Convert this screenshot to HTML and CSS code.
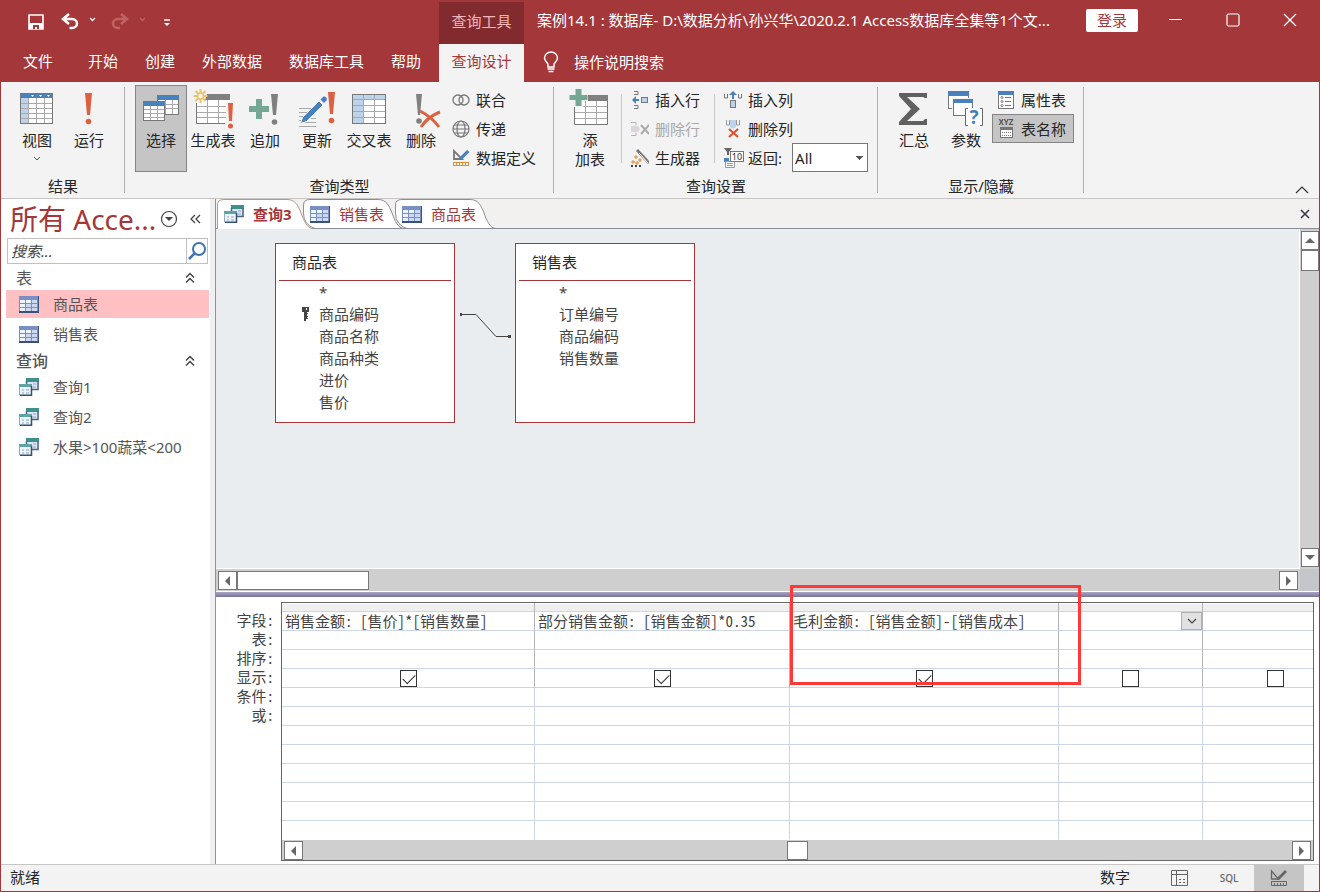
FILE: index.html
```html
<!DOCTYPE html>
<html lang="zh-CN">
<head>
  <meta charset="UTF-8">
  <title>案例14.1 : 数据库</title>
  <link rel="stylesheet" href="styles.css">
</head>
<body>
  <!-- shared icons -->
  <svg class="sprite" aria-hidden="true">
    <symbol id="i-table" viewBox="0 0 20 17">
      <rect width="20" height="17" fill="#7890c4"/>
      <rect y="15" width="20" height="2" fill="#3d5078"/>
      <path d="M19.500 0v17" stroke="#3d5078"/>
      <path d="M1 4h5v3H1zM7 4h5v3H7zM1 8h5v3H1zM1 12h5v3H1z" fill="#eef4fc"/>
      <path d="M13 4h5v3h-5zM7 8h5v3H7zM13 8h5v3h-5zM7 12h5v3H7zM13 12h5v3h-5z" fill="#ccd8f2"/>
    </symbol>
    <symbol id="i-query" viewBox="0 0 20 18">
      <rect x="7" y="0" width="13" height="12" fill="#dce6f4"/>
      <path d="M7 0h13v4H7z" fill="#3f8f8c"/>
      <path d="M7.500 3v4M19 3v8.500h-7" fill="none" stroke="#4a6684" stroke-width="1.500"/>
      <path d="M14 6h3M14 9h3" stroke="#8fa5c6"/>
      <rect x="0" y="6" width="13" height="12" fill="#eef4fc"/>
      <path d="M0 6h13v3H0z" fill="#5fa3a2"/>
      <path d="M.500 8v9" stroke="#8fa5c6"/>
      <path d="M12.500 8v9.200H1" fill="none" stroke="#33506e" stroke-width="1.500"/>
      <path d="M3 12h2M3 15h2M7 12h3M7 15h3" stroke="#8fa5c6"/>
    </symbol>
    <symbol id="i-fold" viewBox="0 0 10 12">
      <path d="M1 5.500l4-4 4 4M1 10.500l4-4 4 4" fill="none" stroke="#444" stroke-width="1.500"/>
    </symbol>
  </svg>

  <div class="app">
    <header class="top">
      <div class="quick">
        <button class="qbtn" aria-label="保存"><svg width="18" height="18" viewBox="0 0 18 18"><path d="M2 2h14v14H2z" fill="none" stroke="#fff" stroke-width="1.600"/><path d="M2 10h14v6H2z" fill="#fff"/><path d="M6 12h6v4h-2v-2H8v2H6z" fill="#a4373a"/></svg></button>
        <button class="qbtn" aria-label="撤消"><svg width="34" height="18" viewBox="0 0 34 18"><path d="M8 1L2 6l6 5M2 6h9a5 4.500 0 0 1 0 9H8.500" fill="none" stroke="#fff" stroke-width="2.500"/><path d="M29 5l2.500 2.500L34 5" fill="none" stroke="#fff" stroke-width="1.300"/></svg></button>
        <button class="qbtn" aria-label="恢复" disabled><svg width="34" height="18" viewBox="0 0 34 18"><path d="M10 1l6 5-6 5M16 6H7a5 4.500 0 0 0 0 9h2" fill="none" stroke="#bf6365" stroke-width="2.500"/><path d="M29 5l2.500 2.500L34 5" fill="none" stroke="#bf6365" stroke-width="1.300"/></svg></button>
        <button class="qbtn" aria-label="自定义快速访问工具栏"><svg width="8" height="10" viewBox="0 0 8 10"><path d="M1 3h6" stroke="#fff" stroke-width="1.500"/><path d="M1 6h6L4 9z" fill="#fff"/></svg></button>
      </div>
      <div class="context">查询工具</div>
      <div class="caption">
        <span class="doc-name">案例14.1 : 数据库- D:\数据分析\孙兴华\2020.2.1 Access数据库全集等1个文...</span>
        <button class="login">登录</button>
        <div class="win">
          <button aria-label="最小化"><svg width="14" height="14" viewBox="0 0 14 14"><path d="M0 6.500h13" stroke="#fff"/></svg></button>
          <button aria-label="最大化"><svg width="14" height="14" viewBox="0 0 14 14"><rect x="1" y="1" width="12" height="12" rx="1.500" fill="none" stroke="#fff" stroke-width="1.200"/></svg></button>
          <button aria-label="关闭"><svg width="14" height="14" viewBox="0 0 14 14"><path d="M1 1l12 12M13 1L1 13" stroke="#fff" stroke-width="1.300"/></svg></button>
        </div>
      </div>
      <nav class="menu">
        <a href="#" class="file">文件</a>
        <a href="#">开始</a>
        <a href="#">创建</a>
        <a href="#">外部数据</a>
        <a href="#">数据库工具</a>
        <a href="#">帮助</a>
      </nav>
      <a href="#" class="menu-on">查询设计</a>
      <a href="#" class="tell">
        <svg width="16" height="22" viewBox="0 0 16 22"><path d="M5 16v-2.500C5 11.500 1.500 10.500 1.500 7a6.500 6 0 0 1 13 0c0 3.500-3.500 4.500-3.500 6.500V16z" fill="none" stroke="#fff" stroke-width="1.500"/><path d="M4.500 18h7M5.500 20.500h5" stroke="#fff" stroke-width="1.500"/></svg>
        操作说明搜索
      </a>
    </header>

    <div class="ribbon">
      <section class="group">
        <div class="tools">
          <button class="big">
            <svg width="52" height="44" viewBox="0 0 52 44"><rect x="9.500" y="7.500" width="32" height="30" fill="#fff"/><path d="M10 12h8v25h-8z" fill="#bdd3ea"/><path d="M9 7h33v5H9z" fill="#4a80bc"/><path d="M10 17.500h31M10 22.500h31M10 27.500h31M10 32.500h31M17.500 12v25M25.500 12v25M33.500 12v25" stroke="#a9a9a9"/><path d="M20 9h3l-1.500 2zM28 9h3l-1.500 2zM36 9h3l-1.500 2z" fill="#fff"/><rect x="9.500" y="7.500" width="32" height="30" fill="none" stroke="#777"/></svg>
            <span>视图</span>
            <svg class="more" width="8" height="6" viewBox="0 0 8 6"><path d="M1 1l3 3 3-3" fill="none" stroke="#555"/></svg>
          </button>
          <button class="big">
            <svg width="52" height="44" viewBox="0 0 52 44"><path d="M22 7h7l-2 22h-3z" fill="#db6141"/><circle cx="25.500" cy="35.500" r="2.800" fill="#db6141"/></svg>
            <span>运行</span>
          </button>
        </div>
        <h2>结果</h2>
      </section>

      <section class="group">
        <div class="tools">
          <button class="big on">
            <svg width="52" height="44" viewBox="0 0 52 44"><rect x="22.500" y="9.500" width="21" height="19" fill="#fff" stroke="#777"/><path d="M22 9h22v5H22z" fill="#4a80bc"/><path d="M23 18.500h20M23 22.500h20M30.500 14v14M37.500 14v14" stroke="#a9a9a9"/><rect x="8.500" y="15.500" width="21" height="19" fill="#fff" stroke="#777"/><path d="M8 15h22v5H8z" fill="#4a80bc"/><path d="M9 23.500h20M9 27.500h20M9 31.500h20M15.500 20v14M22.500 20v14" stroke="#a9a9a9"/></svg>
            <span>选择</span>
          </button>
          <button class="big">
            <svg width="52" height="44" viewBox="0 0 52 44"><path d="M9.500 12V37.500h33V10z" fill="#fff"/><path d="M20 8h23v6H18z" fill="#808080"/><path d="M10 20.500h32M10 26.500h32M10 31.500h32M20.500 14v23M31.500 14v23" stroke="#a9a9a9"/><path d="M9.500 17v20.500H38" fill="none" stroke="#777"/><path d="M13.500 3v14M6.500 10h14M8.500 5l10 10M18.500 5l-10 10" stroke="#eec168" stroke-width="2"/><circle cx="13.500" cy="10" r="3" fill="#f3f3f3" stroke="#eec168" stroke-width="1.500"/><path d="M39 16h9v27h-9z" fill="#f3f3f3"/><path d="M41 17h5l-1 18h-3z" fill="#db6141"/><circle cx="43.500" cy="40" r="2.500" fill="#db6141"/></svg>
            <span>生成表</span>
          </button>
          <button class="big">
            <svg width="52" height="44" viewBox="0 0 52 44"><path d="M17 13h6v7h7v6h-7v7h-6v-7h-7v-6h7z" fill="#75a795"/><path d="M32 8h7l-2 21h-3z" fill="#808080"/><circle cx="35.500" cy="36" r="2.800" fill="#808080"/></svg>
            <span>追加</span>
          </button>
          <button class="big">
            <svg width="52" height="44" viewBox="0 0 52 44"><path d="M8 22.500h14M8 26.500h10M8 30.500h6M8 34.500h4M14 36.500h11M8 40.500h17M20 32.500h5" stroke="#a9a9a9"/><path d="M9.500 37.500l2-6L28 15l4 4-16.500 16.500z" fill="#4a80bc" stroke="#f3f3f3"/><path d="M29.500 13.500l2.500-2.500c2-1.500 5 1.500 3.500 3.500L33 17z" fill="#4a80bc"/><path d="M37 6h7l-2 22h-3z" fill="#db6141"/><circle cx="40.500" cy="34.500" r="2.800" fill="#db6141"/></svg>
            <span>更新</span>
          </button>
          <button class="big">
            <svg width="52" height="44" viewBox="0 0 52 44"><rect x="9.500" y="8.500" width="33" height="29" fill="#fff"/><path d="M10 9h32v5H20v23H10z" fill="#bdd3ea"/><path d="M10 13.500h32M10 19.500h32M10 25.500h32M10 31.500h32M20.500 9v28M31.500 9v28" stroke="#a9a9a9"/><rect x="9.500" y="8.500" width="33" height="29" fill="none" stroke="#777"/></svg>
            <span>交叉表</span>
          </button>
          <button class="big">
            <svg width="52" height="44" viewBox="0 0 52 44"><path d="M21 8h6l-2 21h-2z" fill="#808080"/><circle cx="24" cy="35" r="2.800" fill="#808080"/><path d="M25 25c8 4 14 9 19 16M45 26c-8 3-15 9-19 15" fill="none" stroke="#db6141" stroke-width="3"/></svg>
            <span>删除</span>
          </button>
          <div class="stack">
            <button><svg width="18" height="18" viewBox="0 0 18 18"><g fill="none" stroke="#777" stroke-width="1.300"><circle cx="6" cy="9" r="5"/><circle cx="12" cy="9" r="5"/></g></svg>联合</button>
            <button><svg width="18" height="18" viewBox="0 0 18 18"><g fill="none" stroke="#777" stroke-width="1.200"><circle cx="9" cy="9" r="8"/><ellipse cx="9" cy="9" rx="4" ry="8"/><path d="M1 9h16M2 5h14M2 13h14"/></g></svg>传递</button>
            <button><svg width="18" height="18" viewBox="0 0 18 18"><path d="M2 2v8h8z" fill="none" stroke="#777" stroke-width="1.800"/><path d="M7 11l1-3 7-7 2.500 2-7 7z" fill="#4a80bc"/><rect x="1.500" y="13.500" width="15" height="3" fill="#fff" stroke="#e38a35"/><path d="M4.500 14v2M7.500 14v2M10.500 14v2M13.500 14v2" stroke="#e38a35"/></svg>数据定义</button>
          </div>
        </div>
        <h2>查询类型</h2>
      </section>

      <section class="group">
        <div class="tools">
          <button class="big">
            <svg width="52" height="44" viewBox="0 0 52 44"><path d="M10.500 10h33v28.500h-33z" fill="#fff"/><path d="M11 20.500h32M11 26.500h32M11 32.500h32M21.500 15v23M32.500 15v23" stroke="#a9a9a9"/><path d="M10.500 20v18.500h33V15" fill="none" stroke="#777"/><path d="M24 9h20v6H24z" fill="#808080"/><path d="M9 2h11v5h4v8h-5v6H9z" fill="#f3f3f3"/><path d="M11.500 3h6v6h6v5h-6v6h-6v-6h-6V9h6z" fill="#75a795"/></svg>
            <span>添<br>加表</span>
          </button>
          <div class="stack rows">
            <button><svg width="18" height="18" viewBox="0 0 18 18"><path d="M3 .500h4v3H3M3 17.500h4v-3H3" fill="none" stroke="#777"/><path d="M2 9h6" stroke="#4a80bc" stroke-width="2"/><path d="M1 9l4-4v8z" fill="#4a80bc"/><rect x="10.500" y="6.500" width="6" height="5" fill="#bdd3ea" stroke="#777"/></svg>插入行</button>
            <button disabled><svg width="18" height="18" viewBox="0 0 18 18"><path d="M0 2.500h5v3M0 15.500h5v-3" fill="none" stroke="#b5b5b5"/><path d="M0 6h7l2 3-2 3H0z" fill="#dcd5dc"/><path d="M10 5l8 9M18 5l-8 9" stroke="#aaa" stroke-width="2"/></svg>删除行</button>
            <button><svg width="18" height="18" viewBox="0 0 18 18"><path d="M6 1l12 13" stroke="#777" stroke-width="3"/><path d="M8 4l9 10" stroke="#fff"/><path d="M1 12h2v2H1zM4 7h2v2H4zM5 13h2v2H5zM8 10h2v2H8z" fill="none" stroke="#e38a35"/><path d="M0 17h2M4 17h2M8 17h2" stroke="#444" stroke-width="2"/></svg>生成器</button>
          </div>
          <div class="stack cols">
            <button><svg width="18" height="18" viewBox="0 0 18 18"><path d="M.500 3v4h3V3M14.500 7V3M14.500 7h3V3" fill="none" stroke="#777"/><path d="M9 2v6" stroke="#4a80bc" stroke-width="2"/><path d="M9 0l4 4H5z" fill="#4a80bc"/><rect x="6.500" y="9.500" width="5" height="7" fill="#bdd3ea" stroke="#777"/></svg>插入列</button>
            <button><svg width="18" height="18" viewBox="0 0 18 18"><path d="M2.500 0v5h3V0M12.500 0v5h3V0" fill="none" stroke="#999"/><path d="M6 0h6v7l-3 2-3-2z" fill="#bdd3ea"/><path d="M5 9l9 8M14 9l-9 8" stroke="#db5132" stroke-width="2.200"/></svg>删除列</button>
            <div class="return">
              <svg width="20" height="20" viewBox="0 0 20 20"><path d="M0 0h8L5 4v3H3V4z" fill="#666"/><path d="M0 10h5v4H0z" fill="#4a80bc"/><path d="M1.500 13.500h9v6h-9z" fill="#fff" stroke="#999"/><path d="M3 15.500h6M3 17.500h6" stroke="#999"/><rect x="6.500" y="3.500" width="13" height="10" fill="#fff" stroke="#777"/><text x="13" y="12" class="t-ten">10</text></svg>
              <label for="top">返回:</label>
              <select id="top"><option>All</option></select>
            </div>
          </div>
        </div>
        <h2>查询设置</h2>
      </section>

      <section class="group">
        <div class="tools">
          <button class="big">
            <svg width="52" height="44" viewBox="0 0 52 44"><path d="M11 7h28v5h-2l-2-1H19l13 12-13 12h16l2-2h2v6H11v-3l12-13L11 10z" fill="#606060"/></svg>
            <span>汇总</span>
          </button>
          <button class="big">
            <svg width="52" height="44" viewBox="0 0 52 44"><rect x="8.500" y="5.500" width="20" height="17" fill="#fff" stroke="#777"/><path d="M8 5h21v5H8z" fill="#4a80bc"/><rect x="12" y="12" width="22" height="18" fill="#f3f3f3"/><rect x="13.500" y="13.500" width="19" height="16" fill="#fff" stroke="#777"/><path d="M13 13h20v4H13z" fill="#4a80bc"/><rect x="25" y="22" width="18" height="18" fill="#fff"/><path d="M28 22.500h-2.500v17H28M40 22.500h2.500v17H40" fill="none" stroke="#666"/><text x="34" y="38" class="t-ask">?</text></svg>
            <span>参数</span>
          </button>
          <div class="stack">
            <button><svg width="18" height="18" viewBox="0 0 18 18"><rect x="1.500" y=".500" width="15" height="17" fill="#fff" stroke="#777"/><path d="M1 0h16v4H1z" fill="#4a80bc"/><path d="M8 6.500h6M8 10.500h6M8 14.500h6" stroke="#777"/><g fill="none" stroke="#777"><circle cx="5" cy="6.500" r="1"/><circle cx="5" cy="10.500" r="1"/><circle cx="5" cy="14.500" r="1"/></g></svg>属性表</button>
            <button class="on"><svg width="18" height="20" viewBox="0 0 18 20"><text x="9" y="6" class="t-xyz">XYZ</text><rect x="3.500" y="8.500" width="12" height="10" fill="#fff" stroke="#777"/><path d="M3 8h13v3H3z" fill="#777"/><path d="M5 13.500h10M5 16.500h10" stroke="#777" stroke-dasharray="1 1"/></svg>表名称</button>
          </div>
        </div>
        <h2>显示/隐藏</h2>
      </section>
      <button class="collapse" aria-label="折叠功能区"><svg width="14" height="8" viewBox="0 0 14 8"><path d="M1 7l6-6 6 6" fill="none" stroke="#333" stroke-width="1.200"/></svg></button>
    </div>

    <main class="work">
      <aside class="side">
        <div class="side-head">
          <h1>所有 Acce...</h1>
          <button aria-label="浏览类别"><svg width="18" height="18" viewBox="0 0 18 18"><circle cx="9" cy="9" r="7.500" fill="none" stroke="#444" stroke-width="1.200"/><path d="M5 7h8l-4 4z" fill="#444"/></svg></button>
          <button aria-label="百叶窗开关"><svg width="12" height="12" viewBox="0 0 12 12"><path d="M5 2L1 6l4 4M10 2L6 6l4 4" fill="none" stroke="#444" stroke-width="1.300"/></svg></button>
        </div>
        <div class="search">
          <input type="text" placeholder="搜索..." aria-label="搜索">
          <button aria-label="开始搜索"><svg width="20" height="20" viewBox="0 0 20 20"><circle cx="12" cy="8" r="6" fill="none" stroke="#3d74b5" stroke-width="2"/><path d="M8 12l-6 6" stroke="#3d74b5" stroke-width="2.500"/></svg></button>
        </div>
        <h2>表<svg width="10" height="12"><use href="#i-fold"/></svg></h2>
        <ul>
          <li class="on"><a href="#"><svg width="20" height="17"><use href="#i-table"/></svg>商品表</a></li>
          <li><a href="#"><svg width="20" height="17"><use href="#i-table"/></svg>销售表</a></li>
        </ul>
        <h2 class="strong">查询<svg width="10" height="12"><use href="#i-fold"/></svg></h2>
        <ul>
          <li><a href="#"><svg width="20" height="18"><use href="#i-query"/></svg>查询1</a></li>
          <li><a href="#"><svg width="20" height="18"><use href="#i-query"/></svg>查询2</a></li>
          <li><a href="#"><svg width="20" height="18"><use href="#i-query"/></svg>水果&gt;100蔬菜&lt;200</a></li>
        </ul>
      </aside>
      <div class="splitter"></div>

      <div class="doc">
        <div class="tabs">
          <button class="tab active">
            <svg class="shape" width="96" height="30" viewBox="0 0 96 30"><path d="M.500 30V6Q.500 .500 7 .500H70C78 .500 81 6 84 14S90 29.500 96 29.500V30z" fill="#fff"/><path d="M.500 30V6Q.500 .500 7 .500H70C78 .500 81 6 84 14S90 29.500 96 29.500" fill="none" stroke="#b09a90"/></svg>
            <svg width="20" height="18"><use href="#i-query"/></svg><span>查询3</span>
          </button>
          <button class="tab">
            <svg class="shape" width="101" height="30" viewBox="0 0 101 30"><path d="M12 29.500Q.500 26 .500 14V6Q.500 .500 7 .500H75C83 .500 86 6 89 14S95 29.500 101 29.500z" fill="#fff" stroke="#8b8d98"/></svg>
            <svg width="20" height="17"><use href="#i-table"/></svg><span>销售表</span>
          </button>
          <button class="tab">
            <svg class="shape" width="101" height="30" viewBox="0 0 101 30"><path d="M12 29.500Q.500 26 .500 14V6Q.500 .500 7 .500H75C83 .500 86 6 89 14S95 29.500 101 29.500z" fill="#fff" stroke="#8b8d98"/></svg>
            <svg width="20" height="17"><use href="#i-table"/></svg><span>商品表</span>
          </button>
          <button class="tab-close" aria-label="关闭"><svg width="10" height="10" viewBox="0 0 10 10"><path d="M1 1l8 8M9 1L1 9" stroke="#3a3a44" stroke-width="1.600"/></svg></button>
        </div>

        <div class="upper">
          <div class="canvas">
            <div class="tbl tbl-goods">
              <h3>商品表</h3>
              <ul>
                <li>*</li>
                <li class="pk"><svg width="7" height="14" viewBox="0 0 7 14"><path d="M0 0h7v5H5v1h1v1H5v2h1v1H5v1h1v1H4v2H2V5H0z" fill="#444"/><path d="M4 1h1v2H4z" fill="#fff"/></svg>商品编码</li>
                <li>商品名称</li>
                <li>商品种类</li>
                <li>进价</li>
                <li>售价</li>
              </ul>
            </div>
            <svg class="join" width="52" height="30" viewBox="0 0 52 30"><path d="M1 4.500h15L36 26.500h14" fill="none" stroke="#444"/><path d="M0 3h2v3H0zM48 25h3v3h-3z" fill="#444"/></svg>
            <div class="tbl tbl-sales">
              <h3>销售表</h3>
              <ul>
                <li>*</li>
                <li>订单编号</li>
                <li>商品编码</li>
                <li>销售数量</li>
              </ul>
            </div>
          </div>
          <div class="vbar">
            <button class="arrow up" aria-label="向上"></button>
            <div class="thumb"></div>
            <button class="arrow down" aria-label="向下"></button>
          </div>
          <div class="hbar">
            <button class="arrow left" aria-label="向左"></button>
            <div class="thumb"></div>
            <button class="arrow right" aria-label="向右"></button>
          </div>
          <div class="corner"></div>
        </div>

        <div class="divider"></div>

        <div class="lower">
          <div class="labels">
            <span>字段:</span><span>表:</span><span>排序:</span><span>显示:</span><span>条件:</span><span>或:</span>
          </div>
          <div class="qbe">
            <div class="qbe-view">
              <table>
                <colgroup><col class="c1"><col class="c2"><col class="c3"><col class="c4"><col class="c5"></colgroup>
                <thead>
                  <tr><th></th><th></th><th></th><th></th><th></th></tr>
                </thead>
                <tbody class="head-rows">
                  <tr>
                    <td><input class="field" type="text" aria-label="字段 1" value="销售金额: [售价]*[销售数量]"></td>
                    <td><input class="field" type="text" aria-label="字段 2" value="部分销售金额: [销售金额]*0.35"></td>
                    <td><input class="field" type="text" aria-label="字段 3" value="毛利金额: [销售金额]-[销售成本]"></td>
                    <td><div class="combo"><input class="field" type="text" aria-label="字段 4"><button aria-label="选择字段"><svg width="10" height="6" viewBox="0 0 10 6"><path d="M1 1l4 4 4-4" fill="none" stroke="#444" stroke-width="1.200"/></svg></button></div></td>
                    <td><input class="field" type="text" aria-label="字段 5"></td>
                  </tr>
                  <tr><td></td><td></td><td></td><td></td><td></td></tr>
                  <tr><td></td><td></td><td></td><td></td><td></td></tr>
                  <tr>
                    <td><input type="checkbox" aria-label="显示 1" checked></td>
                    <td><input type="checkbox" aria-label="显示 2" checked></td>
                    <td><input type="checkbox" aria-label="显示 3" checked></td>
                    <td><input type="checkbox" aria-label="显示 4"></td>
                    <td><input type="checkbox" aria-label="显示 5"></td>
                  </tr>
                </tbody>
                <tbody>
                  <tr><td></td><td></td><td></td><td></td><td></td></tr>
                  <tr><td></td><td></td><td></td><td></td><td></td></tr>
                  <tr><td></td><td></td><td></td><td></td><td></td></tr>
                  <tr><td></td><td></td><td></td><td></td><td></td></tr>
                  <tr><td></td><td></td><td></td><td></td><td></td></tr>
                  <tr><td></td><td></td><td></td><td></td><td></td></tr>
                  <tr><td></td><td></td><td></td><td></td><td></td></tr>
                  <tr><td></td><td></td><td></td><td></td><td></td></tr>
                </tbody>
              </table>
            </div>
            <div class="hbar">
              <button class="arrow left" aria-label="向左"></button>
              <div class="thumb"></div>
              <button class="arrow right" aria-label="向右"></button>
            </div>
          </div>
          <div class="mark"></div>
        </div>
      </div>
    </main>

    <footer class="status">
      <span>就绪</span>
      <span class="num">数字</span>
      <button aria-label="数据表视图"><svg width="17" height="16" viewBox="0 0 17 16"><path d="M.500 .500h16v15H.500zM.500 4.500h16M5.500 .500v15" fill="none" stroke="#666"/><path d="M8 9.500h2M12 9.500h2M8 12.500h2M12 12.500h2" stroke="#666"/></svg></button>
      <button class="sql">SQL</button>
      <button class="on" aria-label="设计视图"><svg width="18" height="18" viewBox="0 0 18 18"><path d="M1.500 2v8h7z" fill="none" stroke="#666" stroke-width="1.300"/><path d="M7 11l1-3 7-7 2 2-7 7z" fill="#666"/><path d="M1.500 12.500h15v4h-15zM4.500 14v2M7.500 14v2M10.500 14v2M13.500 14v2" fill="none" stroke="#666"/></svg></button>
    </footer>
  </div>
</body>
</html>
```
FILE: styles.css
```css
* {
  box-sizing: border-box;
}
body {
  margin: 0;
  font-family: "Noto Sans", "Noto Sans CJK SC", sans-serif;
  font-size: 15px;
  line-height: 20px;
  color: #262626;
}
button,
input,
select {
  font: inherit;
  color: inherit;
}
button {
  border: 0;
  padding: 0;
  background: none;
}
a {
  color: inherit;
  text-decoration: none;
}
h1, h2, h3, ul {
  margin: 0;
  padding: 0;
  font-weight: normal;
  list-style: none;
}
svg {
  display: block;
  flex: none;
}
.sprite {
  position: absolute;
  width: 0;
  height: 0;
}
.app {
  display: flex;
  flex-direction: column;
  min-height: 100vh;
  border: 1px solid #a4373a;
  border-top: 0;
  background: #f3f3f3;
}

/* title bar and menu */
.top {
  display: grid;
  grid-template-columns: 438px 85px 1fr;
  grid-template-rows: 44px 38px;
  background: #a4373a;
  color: #fff;
}
.quick {
  display: flex;
  align-items: center;
  gap: 16px;
  padding-left: 26px;
}
.quick svg {
  overflow: visible;
}
.quick button:last-child {
  margin-left: 2px;
}
.context {
  margin-top: 2px;
  background: #822b2e;
  color: #f2b7b9;
  line-height: 38px;
  text-align: center;
}
.caption {
  display: flex;
  align-items: center;
  padding: 0 1px 4px 0;
  min-width: 0;
}
.doc-name {
  flex: 1;
  padding-left: 13px;
  overflow: hidden;
  white-space: nowrap;
}
.login {
  width: 52px;
  height: 23px;
  margin: 0 9px;
  border-radius: 2px;
  background: #fff;
  color: #a4373a;
  line-height: 23px;
}
.win {
  display: flex;
}
.win button {
  display: flex;
  justify-content: center;
  width: 57px;
}
.menu {
  display: flex;
  align-items: center;
  gap: 27px;
  padding: 0 0 4px 22px;
}
.file {
  margin-right: 8px;
}
.menu-on {
  background: #f3f3f3;
  color: #a4373a;
  line-height: 34px;
  text-align: center;
}
.tell {
  display: flex;
  align-items: center;
  gap: 15px;
  padding: 0 0 2px 19px;
}

/* ribbon */
.ribbon {
  display: flex;
  height: 117px;
  padding-top: 3px;
  border-bottom: 1px solid #c8c6c4;
}
.group {
  display: flex;
  flex-direction: column;
  padding: 0 10px;
  background: linear-gradient(#b0b0b0, #b0b0b0) right 2px / 1px 106px no-repeat;
}
.group h2 {
  margin-top: 4px;
  font-size: 15px;
  text-align: center;
}
.tools {
  display: flex;
  height: 87px;
}
.big {
  display: flex;
  flex-direction: column;
  align-items: center;
  width: 52px;
  padding-top: 1px;
  line-height: 19px;
  white-space: nowrap;
}
.big span {
  margin-top: 1px;
}
.big .more {
  margin-top: 6px;
}
.on {
  background: #c5c5c5;
}
.ribbon .on {
  box-shadow: inset 0 0 0 1px #848484;
}
.stack {
  display: flex;
  flex-direction: column;
  align-items: flex-start;
}
.stack button,
.return {
  display: flex;
  align-items: center;
  gap: 6px;
  height: 29px;
  padding: 0 8px 0 5px;
}
.stack button:disabled {
  color: #a9a9a9;
}
.rows,
.cols {
  background: linear-gradient(#c8c8c8, #c8c8c8) 0 9px / 1px 69px no-repeat;
}
.rows {
  margin-left: 5px;
}
.rows button {
  padding: 0 14px 0 10px;
}
.cols button {
  padding-left: 10px;
}
.return {
  gap: 4px;
  padding: 0 0 0 10px;
}
.return select {
  width: 76px;
  height: 29px;
  margin-left: 6px;
  padding: 0 2px;
  appearance: none;
  border: 1px solid #777;
  border-radius: 0;
  background: linear-gradient(45deg, transparent 50%, #555 50%) 62px 12px / 4px 4px no-repeat,
    linear-gradient(-45deg, transparent 50%, #555 50%) 66px 12px / 4px 4px no-repeat, #fff;
}
.t-ten {
  font: 9px "Noto Sans", sans-serif;
  fill: #333;
  text-anchor: middle;
}
.t-ask {
  font: bold 19px "Noto Sans", sans-serif;
  fill: #4a80bc;
  text-anchor: middle;
}
.t-xyz {
  font: bold 8px "Noto Sans", sans-serif;
  fill: #555;
  text-anchor: middle;
}
.collapse {
  align-self: flex-end;
  margin-left: auto;
  padding: 4px 10px;
}

/* navigation pane */
.work {
  display: flex;
  flex: 1;
}
.side {
  width: 209px;
  background: #fff;
  color: #555;
}
.side-head {
  display: flex;
  align-items: center;
  height: 39px;
  padding-left: 9px;
}
.side-head h1 {
  width: 150px;
  color: #a4373a;
  font-size: 28px;
  line-height: 38px;
  white-space: nowrap;
}
.side-head button + button {
  margin-left: 12px;
}
.search {
  display: flex;
  height: 26px;
  margin: 0 2px 1px 6px;
  border: 1px solid #c0c0c0;
}
.search input {
  flex: 1;
  min-width: 0;
  padding: 0 3px;
  border: 0;
  font-style: italic;
}
.search input::placeholder {
  color: #444;
  opacity: 1;
}
.search button {
  width: 21px;
  border-left: 1px solid #c0c0c0;
}
.side h2 {
  display: flex;
  align-items: center;
  justify-content: space-between;
  height: 25px;
  padding: 0 15px;
  font-size: 16px;
}
.side .strong {
  font-weight: 500;
}
.side li {
  height: 28px;
  margin: 0 1px 2px 5px;
}
.side li:last-child {
  margin-bottom: 0;
}
.side li.on {
  background: #ffc0c3;
}
.side a {
  display: flex;
  align-items: center;
  gap: 14px;
  height: 28px;
  padding-left: 13px;
}
.splitter {
  width: 6px;
  border-right: 1px solid #9092a0;
  background: #f0f0f3;
}

/* document tabs */
.doc {
  display: flex;
  flex: 1;
  flex-direction: column;
  min-width: 0;
  background: #fff;
}
.tabs {
  display: flex;
  height: 30px;
  padding-left: 1px;
  border-bottom: 1px solid #8b8d98;
  background: #f3f1f0;
}
.tab {
  position: relative;
  z-index: 2;
  display: flex;
  align-items: center;
  gap: 9px;
  width: 92px;
  height: 30px;
  padding-left: 7px;
  color: #a4373a;
  white-space: nowrap;
}
.tab + .tab {
  z-index: 1;
}
.tab + .tab + .tab {
  z-index: 0;
}
.tab.active {
  z-index: 3;
  width: 86px;
  font-weight: bold;
}
.shape {
  position: absolute;
  z-index: -1;
  top: 0;
  left: 0;
}
.tab-close {
  margin-left: auto;
  padding: 0 9px;
}

/* relationship area */
.upper {
  display: grid;
  flex: 1;
  grid-template-columns: 1fr 19px;
  grid-template-rows: 1fr 22px;
}
.canvas {
  position: relative;
  min-height: 200px;
  border-right: 1px solid #fff;
  border-bottom: 1px solid #fff;
  background: #e9edf0;
}
.tbl {
  position: absolute;
  top: 14px;
  width: 180px;
  height: 180px;
  border: 1px solid #a4373a;
  background: #fff;
}
.tbl-goods {
  left: 59px;
}
.tbl-sales {
  left: 299px;
}
.join {
  position: absolute;
  left: 244px;
  top: 81px;
}
.tbl h3 {
  height: 37px;
  margin: 0 3px;
  padding-left: 13px;
  border-bottom: 1px solid #a4373a;
  font-size: 15px;
  line-height: 36px;
}
.tbl li {
  display: flex;
  align-items: center;
  height: 22px;
  padding-left: 43px;
  color: #444;
}
.tbl .pk {
  gap: 10px;
  padding-left: 26px;
}
.hbar,
.vbar {
  display: flex;
  background: #cfcfcf;
}
.hbar {
  height: 22px;
  padding: 2px;
}
.vbar {
  flex-direction: column;
  padding: 2px 0 2px 1px;
}
.arrow,
.thumb {
  border: 1px solid #777;
  background: #fff;
}
.arrow {
  display: flex;
  align-items: center;
  justify-content: center;
  flex: none;
  width: 19px;
  height: 19px;
}
.vbar .arrow {
  width: auto;
}
.hbar .thumb {
  width: 132px;
  height: 19px;
}
.vbar .thumb {
  height: 21px;
}
.arrow::before {
  content: "";
  border: 5px solid transparent;
}
.left::before {
  border-left: 0;
  border-right-color: #666;
}
.right::before {
  border-right: 0;
  border-left-color: #666;
}
.up::before {
  border-top: 0;
  border-bottom-color: #666;
}
.down::before {
  border-bottom: 0;
  border-top-color: #666;
}
.right {
  margin-left: auto;
}
.down {
  margin-top: auto;
}
.corner {
  background: #c3c6cb;
}
.divider {
  height: 6px;
  border-top: 1px solid #fff;
  background: linear-gradient(#aaa6c4, #78749a);
}

/* design grid */
.lower {
  position: relative;
  display: flex;
  padding: 5px 5px 3px 0;
  color: #444;
  font-family: "Noto Sans Mono CJK SC", "Noto Sans CJK SC", monospace;
}
.labels {
  display: flex;
  flex-direction: column;
  width: 65px;
  padding: 8px 7px 0 0;
  text-align: right;
}
.labels span {
  line-height: 19px;
}
.qbe {
  flex: 1;
  min-width: 0;
  border: 1px solid #666;
}
.qbe-view {
  overflow: hidden;
}
table {
  width: 1066px;
  table-layout: fixed;
  border-spacing: 0;
}
.c1 { width: 253px; }
.c2 { width: 255px; }
.c3 { width: 269px; }
.c4 { width: 144px; }
.c5 { width: 145px; }
th {
  height: 9px;
  padding: 0;
  border: solid #b3b3ba;
  border-width: 0 1px 0 0;
  background: linear-gradient(#fff 1px, #efefef 1px 8px, #ccd6e6 8px);
}
td {
  height: 19px;
  padding: 0;
  border: solid #ccd6e6;
  border-width: 0 1px 1px 0;
  line-height: 0;
  text-align: center;
}
.head-rows td {
  border-right-color: #b3b3ba;
}
tbody:last-child tr:last-child td {
  border-bottom-color: #fff;
}
.field {
  width: 100%;
  min-width: 0;
  height: 18px;
  padding: 0 3px;
  border: 0;
  background: none;
  line-height: 18px;
}
.combo {
  display: flex;
}
.combo button {
  display: flex;
  align-items: center;
  justify-content: center;
  flex: none;
  width: 21px;
  height: 18px;
  border: 1px solid #b0b0b0;
  background: #e1e1e1;
}
input[type="checkbox"] {
  width: 17px;
  height: 17px;
  margin: 1px 0 0;
  appearance: none;
  border: 1px solid #333;
  background: #fff;
  vertical-align: top;
}
input[type="checkbox"]:checked::before {
  content: "";
  display: block;
  width: 11px;
  height: 6px;
  margin: 3px 0 0 2px;
  border: solid #333;
  border-width: 0 0 1px 1px;
  transform: rotate(-45deg);
}
.qbe .hbar {
  height: 20px;
  padding: 1px 2px 0;
}
.qbe .thumb {
  width: 21px;
  margin-left: auto;
}
/* highlighted expression */
.mark {
  position: absolute;
  left: 574px;
  top: -12px;
  width: 291px;
  height: 100px;
  border: 3px solid #ff3838;
}

/* status bar */
.status {
  display: flex;
  height: 27px;
  padding: 0 15px 0 9px;
  border-top: 1px solid #c6c6c6;
  line-height: 25px;
}
.status .num {
  margin-left: auto;
  padding-right: 24px;
}
.status button {
  display: flex;
  align-items: center;
  justify-content: center;
  width: 50px;
  height: 26px;
}
.status .sql {
  color: #666;
  font-size: 10px;
  font-weight: 500;
}
```
